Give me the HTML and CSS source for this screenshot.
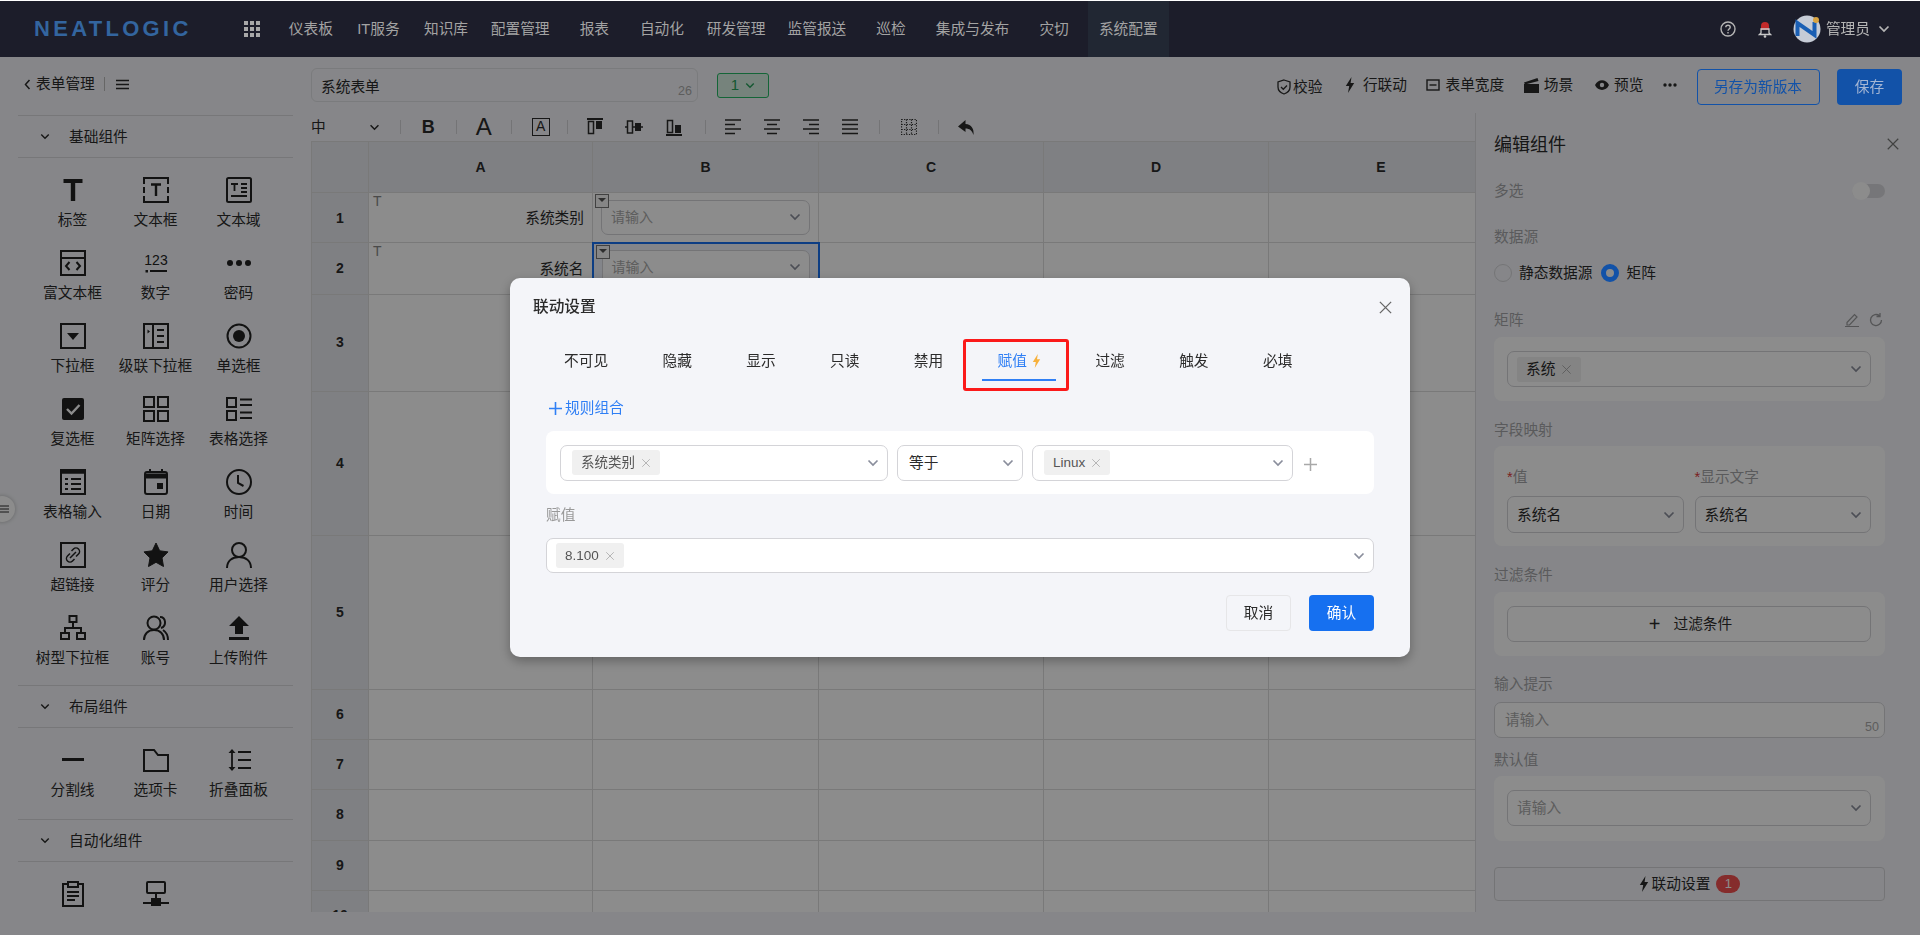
FILE: index.html
```html
<!DOCTYPE html>
<html lang="zh-CN">
<head>
  <meta charset="UTF-8" />
  <title>系统表单</title>
  <link rel="stylesheet" href="styles.css">
</head>
<body>

<svg class="sprite" aria-hidden="true">
  <symbol id="chev" viewBox="0 0 12 8"><path d="M1.5 1.5 6 6l4.5-4.5" fill="none" stroke="currentColor" stroke-width="1.7"/></symbol>
  <symbol id="cross" viewBox="0 0 12 12"><path d="M1.5 1.5l9 9M10.5 1.5l-9 9" fill="none" stroke="currentColor" stroke-width="1"/></symbol>
  <symbol id="bolt" viewBox="0 0 10 16"><path d="M6.5 0 0.8 9h3.4L3 16l6.2-10H5.6z" fill="currentColor"/></symbol>
</svg>

<header class="nav">
  <div class="logo">NEATLOGIC</div>
  <svg class="nav-grid" width="16" height="16" viewBox="0 0 16 16" fill="#a8a8a8">
    <rect width="4" height="4"/><rect x="6" width="4" height="4"/><rect x="12" width="4" height="4"/>
    <rect y="6" width="4" height="4"/><rect x="6" y="6" width="4" height="4"/><rect x="12" y="6" width="4" height="4"/>
    <rect y="12" width="4" height="4"/><rect x="6" y="12" width="4" height="4"/><rect x="12" y="12" width="4" height="4"/>
  </svg>
  <nav class="nav-menu">
    <a>仪表板</a><a>IT服务</a><a>知识库</a><a>配置管理</a><a>报表</a><a>自动化</a><a>研发管理</a><a>监管报送</a><a>巡检</a><a>集成与发布</a><a>灾切</a><a class="active">系统配置</a>
  </nav>
  <div class="nav-right">
    <svg width="16" height="16" viewBox="0 0 16 16" fill="none" stroke="#b5b5b5" stroke-width="1.4"><circle cx="8" cy="8" r="7"/><path d="M5.8 6.2C5.8 3.6 10.2 3.6 10.2 6.2 10.2 8 8 8 8 9.8"/><path d="M8 11v1.6"/></svg>
    <svg class="nav-bell" width="14" height="20" viewBox="0 0 14 20"><path d="M3 7a4 4 0 0 1 8 0v4H3z" fill="#c22a2a"/><path d="M3 10h8v4l1.500 1.500H1.500L3 14z" fill="none" stroke="#c9c9c9" stroke-width="1.300"/><circle cx="7" cy="17.500" r="1.300" fill="#c9c9c9"/></svg>
    <svg class="nav-avatar" width="28" height="28" viewBox="0 0 28 28"><circle cx="14" cy="14" r="13.500" fill="#c6ccd6"/><path d="M4.500 21V8l17 12V7" fill="none" stroke="#1a5fb4" stroke-width="4"/><circle cx="23" cy="5" r="3" fill="#d9a441"/></svg>
    <span class="nav-user">管理员</span>
    <svg class="nav-chev" width="12" height="8"><use href="#chev"/></svg>
  </div>
</header>

<div class="workspace">
  <aside class="left">
    <div class="left-head">
      <svg width="7" height="11" viewBox="0 0 7 11" fill="none" stroke="currentColor" stroke-width="1.500"><path d="M5.500 1 1.500 5.500l4 4.500"/></svg>
      <span class="left-title">表单管理</span>
      <i class="left-sep"></i>
      <svg width="13" height="11" viewBox="0 0 13 11" fill="none" stroke="currentColor" stroke-width="1.400"><path d="M0 1.500h13M0 5.500h13M0 9.500h13"/></svg>
    </div>

    <div class="sec-head"><svg width="10" height="7"><use href="#chev"/></svg><span>基础组件</span></div>
    <div class="widgets">
      <div class="widget"><svg viewBox="0 0 26 26" width="26" height="26"><path d="M3.500 2h19v4h-7.300v18h-4.400V6H3.500z" fill="currentColor"/></svg>标签</div>
      <div class="widget"><svg viewBox="0 0 26 26" width="26" height="26" fill="none" stroke="currentColor" stroke-width="2"><path d="M1 7V1h24v6M1 10v6M25 10v6M1 19v6h24v-6"/><path d="M8 7.500h10M13 7.500V19" stroke-width="2.400"/></svg>文本框</div>
      <div class="widget"><svg viewBox="0 0 26 26" width="26" height="26" fill="none" stroke="currentColor" stroke-width="2"><rect x="1" y="1" width="24" height="24" rx="1.500"/><path d="M5 7h7M8.500 7v7M15 7h6M15 11h6M15 15h6M5 19h16" stroke-width="1.800"/></svg>文本域</div>

      <div class="widget"><svg viewBox="0 0 26 26" width="26" height="26" fill="none" stroke="currentColor" stroke-width="2"><rect x="1" y="1" width="24" height="24"/><path d="M1 8h24"/><path d="M9.500 12 6 16l3.500 4M16.500 12l3.500 4-3.500 4"/></svg>富文本框</div>
      <div class="widget"><svg viewBox="0 0 26 26" width="26" height="26"><text class="num-glyph" x="13" y="15" text-anchor="middle">123</text><rect x="2.500" y="20" width="2.500" height="2.500" fill="currentColor"/><rect x="7" y="20" width="17" height="2" fill="currentColor"/></svg>数字</div>
      <div class="widget"><svg viewBox="0 0 26 26" width="26" height="26" fill="currentColor"><circle cx="4" cy="13" r="3"/><circle cx="13" cy="13" r="3"/><circle cx="22" cy="13" r="3"/></svg>密码</div>

      <div class="widget"><svg viewBox="0 0 26 26" width="26" height="26"><rect x="1" y="1" width="24" height="24" fill="none" stroke="currentColor" stroke-width="2"/><path d="M7 10h12l-6 7z" fill="currentColor"/></svg>下拉框</div>
      <div class="widget"><svg viewBox="0 0 26 26" width="26" height="26" fill="none" stroke="currentColor" stroke-width="2"><rect x="1" y="1" width="24" height="24"/><path d="M10 1v24M14 7h7M14 13h7M14 19h7"/><path d="M4.500 6.500 7 8.500l-2.500 2z" fill="currentColor" stroke="none"/></svg>级联下拉框</div>
      <div class="widget"><svg viewBox="0 0 26 26" width="26" height="26"><circle cx="13" cy="13" r="11.500" fill="none" stroke="currentColor" stroke-width="2"/><circle cx="13" cy="13" r="6" fill="currentColor"/></svg>单选框</div>

      <div class="widget"><svg viewBox="0 0 26 26" width="26" height="26"><rect x="2" y="2" width="22" height="22" rx="2" fill="currentColor"/><path d="M7 13l4.500 4.500L19.500 9" fill="none" stroke="#fff" stroke-width="2.400"/></svg>复选框</div>
      <div class="widget"><svg viewBox="0 0 26 26" width="26" height="26" fill="none" stroke="currentColor" stroke-width="2"><rect x="1" y="1" width="10" height="10"/><rect x="15" y="1" width="10" height="10"/><rect x="1" y="15" width="10" height="10"/><rect x="15" y="15" width="10" height="10"/></svg>矩阵选择</div>
      <div class="widget"><svg viewBox="0 0 26 26" width="26" height="26" fill="none" stroke="currentColor" stroke-width="2"><rect x="1" y="2" width="9" height="9"/><rect x="1" y="15" width="9" height="9"/><path d="M14 3.500h12M14 9h12M14 16.500h12M14 22h12"/></svg>表格选择</div>

      <div class="widget"><svg viewBox="0 0 26 26" width="26" height="26" fill="none" stroke="currentColor" stroke-width="2"><rect x="1" y="1" width="24" height="24"/><path d="M1 3h24" stroke-width="3.500"/><path d="M5 10h3M11 10h10M5 15h3M11 15h10M5 20h3M11 20h10"/></svg>表格输入</div>
      <div class="widget"><svg viewBox="0 0 26 26" width="26" height="26" fill="none" stroke="currentColor" stroke-width="2"><rect x="2" y="3" width="22" height="22" rx="2"/><path d="M2 7h22" stroke-width="5"/><path d="M7 0v4M19 0v4"/><rect x="14" y="14" width="6" height="6" fill="currentColor" stroke="none"/></svg>日期</div>
      <div class="widget"><svg viewBox="0 0 26 26" width="26" height="26" fill="none" stroke="currentColor" stroke-width="2"><circle cx="13" cy="13" r="12"/><path d="M12 6v8l5.500 3"/></svg>时间</div>

      <div class="widget"><svg viewBox="0 0 26 26" width="26" height="26" fill="none" stroke="currentColor" stroke-width="2"><rect x="1" y="1" width="24" height="24"/><path d="M11.500 9l2-2a3.300 3.300 0 0 1 5 5l-2.500 2.500M14.500 17l-2 2a3.300 3.300 0 0 1-5-5L10 11.500M10 16l6-6" stroke-width="1.500"/></svg>超链接</div>
      <div class="widget"><svg viewBox="0 0 26 26" width="26" height="26"><path d="M13 1l3.700 7.800 8.300 1.100-6 6 1.500 8.600L13 20.300l-7.500 4.200L7 15.900l-6-6 8.300-1.100z" fill="currentColor" stroke="currentColor" stroke-linejoin="round"/></svg>评分</div>
      <div class="widget"><svg viewBox="0 0 26 26" width="26" height="26" fill="none" stroke="currentColor" stroke-width="2"><circle cx="13" cy="8" r="7"/><path d="M1 26c0-7 5-11 12-11s12 4 12 11"/></svg>用户选择</div>

      <div class="widget"><svg viewBox="0 0 26 26" width="26" height="26" fill="none" stroke="currentColor" stroke-width="2"><rect x="9.500" y="1" width="7" height="6"/><rect x="1" y="18" width="8" height="6"/><rect x="17" y="18" width="8" height="6"/><path d="M13 7v6M5 18v-5h16v5"/></svg>树型下拉框</div>
      <div class="widget"><svg viewBox="0 0 26 26" width="26" height="26" fill="none" stroke="currentColor" stroke-width="2"><circle cx="11" cy="8" r="6.500"/><path d="M1 25c0-6 4-10 10-10s10 4 10 10M17 2c6 0 7 9 1 11M20 15c3 2 5 5 5 10"/></svg>账号</div>
      <div class="widget"><svg viewBox="0 0 26 26" width="26" height="26" fill="currentColor"><path d="M13 1l10 10h-6v8H9v-8H3z"/><rect x="3" y="22" width="20" height="3"/></svg>上传附件</div>
    </div>

    <div class="sec-head"><svg width="10" height="7"><use href="#chev"/></svg><span>布局组件</span></div>
    <div class="widgets layout">
      <div class="widget"><svg viewBox="0 0 26 26" width="26" height="26"><rect x="2" y="11" width="22" height="3" fill="currentColor"/></svg>分割线</div>
      <div class="widget"><svg viewBox="0 0 26 26" width="26" height="26" fill="none" stroke="currentColor" stroke-width="2"><path d="M1 3h10l4 5h10v16H1z"/></svg>选项卡</div>
      <div class="widget"><svg viewBox="0 0 26 26" width="26" height="26" fill="none" stroke="currentColor" stroke-width="2"><path d="M6 3v20" stroke-width="1.800"/><path d="M2.500 6 6 2l3.500 4zM2.500 20 6 24l3.500-4z" fill="currentColor" stroke="none"/><path d="M12 5h13M12 13h13M12 21h13"/></svg>折叠面板</div>
    </div>

    <div class="sec-head"><svg width="10" height="7"><use href="#chev"/></svg><span>自动化组件</span></div>
    <div class="widgets layout">
      <div class="widget"><svg viewBox="0 0 26 26" width="26" height="26" fill="none" stroke="currentColor" stroke-width="2"><path d="M8 3H3v22h20V3h-5"/><rect x="8" y="1" width="10" height="5"/><path d="M7 11h12M7 15h12M7 19h8"/></svg></div>
      <div class="widget"><svg viewBox="0 0 26 26" width="26" height="26" fill="none" stroke="currentColor" stroke-width="2"><rect x="4" y="1" width="18" height="11" rx="1"/><path d="M13 12v5M0 22h8M18 22h8"/><rect x="8" y="17" width="10" height="8" fill="currentColor" stroke="none"/></svg></div>
    </div>
  </aside>

  <div class="center">
    <div class="topbar">
      <div class="form-name">系统表单<span class="count">26</span></div>
      <div class="version">1<svg width="10" height="7"><use href="#chev"/></svg></div>
      <div class="actions">
        <span class="act act-check"><svg width="14" height="16" viewBox="0 0 14 16" fill="none" stroke="currentColor" stroke-width="1.300"><path d="M7 1l6 2v5c0 3.500-3 6-6 7-3-1-6-3.500-6-7V3z"/><path d="M4 8l2.300 2.300L10 6.500"/></svg>校验</span>
        <span class="act act-link"><svg width="10" height="16"><use href="#bolt"/></svg>行联动</span>
        <span class="act"><svg width="14" height="12" viewBox="0 0 14 12" fill="none" stroke="currentColor" stroke-width="1.400"><rect x="1" y="1" width="12" height="10"/><path d="M3.500 6h7"/></svg>表单宽度</span>
        <span class="act"><svg width="15" height="15" viewBox="0 0 15 15" fill="currentColor"><path d="M0 6h15v9H0zM0 4.500 13.500 0l1 3L1 6.500z"/></svg>场景</span>
        <span class="act act-view"><svg width="14" height="10" viewBox="0 0 14 10"><path d="M0 5c3-6.500 11-6.500 14 0-3 6.500-11 6.500-14 0z" fill="currentColor"/><circle cx="7" cy="5" r="2.200" fill="#f4f5f9"/></svg>预览</span>
        <svg class="act-more" width="14" height="4" viewBox="0 0 14 4" fill="currentColor"><circle cx="2" cy="2" r="1.700"/><circle cx="7" cy="2" r="1.700"/><circle cx="12" cy="2" r="1.700"/></svg>
        <button class="btn btn-outline">另存为新版本</button>
        <button class="btn btn-save">保存</button>
      </div>
    </div>

    <div class="body">
      <div class="editor">
        <div class="fmt">
          <div class="fmt-size">中<svg width="11" height="7"><use href="#chev"/></svg></div>
          <i class="fmt-sep"></i>
          <div class="fmt-one fmt-b">B</div>
          <i class="fmt-sep"></i>
          <div class="fmt-one fmt-a">A</div>
          <i class="fmt-sep"></i>
          <div class="fmt-one"><span class="fmt-boxa">A</span></div>
          <i class="fmt-sep"></i>
          <div class="fmt-group valign">
            <svg width="18" height="18" viewBox="0 0 18 18"><path d="M1 1h16" stroke="currentColor" stroke-width="2"/><rect x="2.500" y="3.500" width="5" height="12" fill="none" stroke="currentColor" stroke-width="1.500"/><rect x="10" y="3" width="6" height="8" fill="currentColor"/></svg>
            <svg width="18" height="18" viewBox="0 0 18 18"><path d="M0 9h18" stroke="currentColor" stroke-width="1.500"/><rect x="2.500" y="3" width="5" height="12" fill="#f4f5f9" stroke="currentColor" stroke-width="1.500"/><rect x="10" y="5" width="6" height="8" fill="currentColor"/></svg>
            <svg width="18" height="18" viewBox="0 0 18 18"><path d="M1 17h16" stroke="currentColor" stroke-width="2"/><rect x="2.500" y="2.500" width="5" height="12" fill="none" stroke="currentColor" stroke-width="1.500"/><rect x="10" y="7" width="6" height="8" fill="currentColor"/></svg>
          </div>
          <i class="fmt-sep"></i>
          <div class="fmt-group halign">
            <svg width="16" height="16" viewBox="0 0 16 16" stroke="currentColor" stroke-width="1.600"><path d="M0 1h16M0 5.500h10M0 10h16M0 14.500h10"/></svg>
            <svg width="16" height="16" viewBox="0 0 16 16" stroke="currentColor" stroke-width="1.600"><path d="M0 1h16M3 5.500h10M0 10h16M3 14.500h10"/></svg>
            <svg width="16" height="16" viewBox="0 0 16 16" stroke="currentColor" stroke-width="1.600"><path d="M0 1h16M6 5.500h10M0 10h16M6 14.500h10"/></svg>
            <svg width="16" height="16" viewBox="0 0 16 16" stroke="currentColor" stroke-width="1.600"><path d="M0 1h16M0 5.500h16M0 10h16M0 14.500h16"/></svg>
          </div>
          <i class="fmt-sep"></i>
          <div class="fmt-one fmt-dots"><svg width="16" height="16" viewBox="0 0 16 16" fill="none" stroke="currentColor" stroke-width="1.200" stroke-dasharray="1.200 1.400"><path d="M.5.500h15v15H.5zM5.500.500v15M10.500.500v15M.5 5.500h15M.5 10.500h15"/></svg></div>
          <i class="fmt-sep"></i>
          <div class="fmt-one fmt-undo"><svg width="17" height="15" viewBox="0 0 17 15"><path d="M7.500 0 0 6.500l7.500 5.500V8.500c4 0 6.500 2 8 6.500.8-6-2-10.500-8-11z" fill="currentColor"/></svg></div>
        </div>

        <div class="sheet-wrap">
          <table class="sheet">
            <colgroup><col class="c-no"><col class="c-a"><col class="c-b"><col class="c-n"><col class="c-n"><col class="c-n"></colgroup>
            <tr class="h51"><th></th><th>A</th><th>B</th><th>C</th><th>D</th><th>E</th></tr>
            <tr class="h50">
              <th>1</th>
              <td class="label-cell"><i class="t-mark">T</i>系统类别</td>
              <td class="comp-cell"><i class="comp-mark"></i><div class="sel sel-cell"><span class="ph">请输入</span><svg width="12" height="8"><use href="#chev"/></svg></div></td>
              <td></td><td></td><td></td>
            </tr>
            <tr class="h52">
              <th>2</th>
              <td class="label-cell"><i class="t-mark">T</i>系统名</td>
              <td class="comp-cell picked"><i class="comp-mark"></i><div class="sel sel-cell"><span class="ph">请输入</span><svg width="12" height="8"><use href="#chev"/></svg></div></td>
              <td></td><td></td><td></td>
            </tr>
            <tr class="h97"><th>3</th><td></td><td></td><td></td><td></td><td></td></tr>
            <tr class="h144"><th>4</th><td></td><td></td><td></td><td></td><td></td></tr>
            <tr class="h154"><th>5</th><td></td><td></td><td></td><td></td><td></td></tr>
            <tr class="h50"><th>6</th><td></td><td></td><td></td><td></td><td></td></tr>
            <tr class="h50"><th>7</th><td></td><td></td><td></td><td></td><td></td></tr>
            <tr class="h51"><th>8</th><td></td><td></td><td></td><td></td><td></td></tr>
            <tr class="h50"><th>9</th><td></td><td></td><td></td><td></td><td></td></tr>
            <tr class="h50"><th>10</th><td></td><td></td><td></td><td></td><td></td></tr>
          </table>
        </div>
      </div>

      <aside class="panel">
        <div class="panel-title">编辑组件<svg width="14" height="14"><use href="#cross"/></svg></div>

        <div class="p-switch"><span class="p-label">多选</span><i class="switch"></i></div>
        <div class="p-label m26">数据源</div>
        <div class="radios">
          <i class="radio"></i><span>静态数据源</span>
          <i class="radio on"></i><span>矩阵</span>
        </div>

        <div class="p-label m26 p-label-tools">矩阵
          <span class="p-tools">
            <svg width="14" height="14" viewBox="0 0 14 14" fill="none" stroke="currentColor" stroke-width="1.200"><path d="M2 9.500 9.500 1.500l2.500 2.500L4.500 12H2zM0 13.500h14"/></svg>
            <svg width="14" height="14" viewBox="0 0 14 14" fill="none" stroke="currentColor" stroke-width="1.300"><path d="M12.500 7A5.500 5.500 0 1 1 10.500 2.800M11 0v3.500H7.500"/></svg>
          </span>
        </div>
        <div class="card h64 m7">
          <div class="sel"><span class="tag tag-p">系统<svg width="11" height="11"><use href="#cross"/></svg></span><svg width="12" height="8"><use href="#chev"/></svg></div>
        </div>

        <div class="p-label m19">字段映射</div>
        <div class="card card-pair h100 m6">
          <div class="pair">
            <div class="pair-col"><div class="p-label"><em>*</em>值</div><div class="sel sel-tall"><span class="val">系统名</span><svg width="12" height="8"><use href="#chev"/></svg></div></div>
            <div class="pair-col"><div class="p-label"><em>*</em>显示文字</div><div class="sel sel-tall"><span class="val">系统名</span><svg width="12" height="8"><use href="#chev"/></svg></div></div>
          </div>
        </div>

        <div class="p-label m19">过滤条件</div>
        <div class="card h64 m7">
          <div class="sel sel-add"><span class="plus">+</span>过滤条件</div>
        </div>

        <div class="p-label m18">输入提示</div>
        <div class="p-input"><span class="ph">请输入</span><span class="count">50</span></div>

        <div class="p-label m12">默认值</div>
        <div class="card h65 m6">
          <div class="sel"><span class="ph">请输入</span><svg width="12" height="8"><use href="#chev"/></svg></div>
        </div>

        <div class="link-btn"><svg width="10" height="16"><use href="#bolt"/></svg>联动设置<span class="badge">1</span></div>
      </aside>
    </div>
  </div>
</div>

<div class="side-handle"><svg width="10" height="8" viewBox="0 0 10 8" fill="none" stroke="currentColor"><path d="M0 1h9M0 4h9M0 7h9"/></svg></div>

<div class="mask"></div>

<div class="modal">
  <div class="modal-title">联动设置<svg width="15" height="15"><use href="#cross"/></svg></div>
  <div class="tabs">
    <span class="tab">不可见</span><span class="tab">隐藏</span><span class="tab">显示</span><span class="tab">只读</span><span class="tab">禁用</span>
    <span class="tab active">赋值<svg width="9" height="14"><use href="#bolt"/></svg></span>
    <span class="tab">过滤</span><span class="tab">触发</span><span class="tab">必填</span>
  </div>
  <div class="callout"></div>

  <div class="add-rule"><svg width="13" height="13" viewBox="0 0 13 13" stroke="currentColor" stroke-width="1.600"><path d="M6.500 0v13M0 6.500h13"/></svg>规则组合</div>

  <div class="rule">
    <div class="sel s-field"><span class="tag">系统类别<svg width="10" height="10"><use href="#cross"/></svg></span><svg width="12" height="8"><use href="#chev"/></svg></div>
    <div class="sel s-op"><span class="val">等于</span><svg width="12" height="8"><use href="#chev"/></svg></div>
    <div class="sel s-value"><span class="tag">Linux<svg width="10" height="10"><use href="#cross"/></svg></span><svg width="12" height="8"><use href="#chev"/></svg></div>
    <svg class="rule-add" width="13" height="13" viewBox="0 0 13 13" stroke="currentColor" stroke-width="1.500"><path d="M6.500 0v13M0 6.500h13"/></svg>
  </div>

  <div class="assign-label">赋值</div>
  <div class="sel s-assign"><span class="tag">8.100<svg width="10" height="10"><use href="#cross"/></svg></span><svg width="12" height="8"><use href="#chev"/></svg></div>

  <div class="modal-foot">
    <button class="btn btn-cancel">取消</button>
    <button class="btn btn-ok">确认</button>
  </div>
</div>

</body>
</html>
```

FILE: styles.css
```css
* {
  box-sizing: border-box;
}

body {
  margin: 0;
  height: 935px;
  overflow: hidden;
  background: #f4f5f9;
  color: #2b2b2b;
  font-family: "Liberation Sans", "Noto Sans CJK SC", sans-serif;
  font-size: 14.7px;
  line-height: 20px;
}

i, em {
  font-style: normal;
}

svg {
  display: block;
  flex: none;
}

.sprite {
  display: none;
}

/* top nav */
.nav {
  position: relative;
  z-index: 5;
  display: flex;
  align-items: center;
  height: 57px;
  border-top: 1px solid #fff;
  background: #1c1d2a;
  color: #a3a3a3;
}

.logo {
  width: 210px;
  padding-left: 34px;
  color: #33659f;
  font-size: 22px;
  font-weight: bold;
  letter-spacing: 3.300px;
}

.nav-grid {
  margin-left: 34px;
}

.nav-menu {
  display: flex;
  margin-left: 17px;
  height: 56px;
}

.nav-menu a {
  display: flex;
  align-items: center;
  justify-content: center;
  min-width: 67.6px;
  padding: 0 11px;
}

.nav-menu a.active {
  background: #212733;
}

.nav-right {
  display: flex;
  align-items: center;
  margin-left: auto;
  padding-right: 30px;
  color: #b5b5b5;
}

.nav-bell {
  margin-left: 22px;
}

.nav-avatar {
  margin-left: 21px;
}

.nav-user {
  margin-left: 5px;
}

.nav-chev {
  margin-left: 8px;
}

/* page */
.workspace {
  display: flex;
  height: 855px;
}

.left {
  width: 311px;
  flex: none;
  padding: 0 18px;
  overflow: hidden;
}

.left-head {
  display: flex;
  align-items: center;
  height: 58px;
  padding: 0 0 4px 6px;
}

.left-title {
  margin-left: 5px;
}

.left-sep {
  width: 1px;
  height: 14px;
  margin: 0 11px 0 9px;
  background: #bbb;
}

.sec-head {
  display: flex;
  align-items: center;
  height: 43px;
  padding-left: 22px;
  border-top: 1px solid #d9d9dc;
  border-bottom: 1px solid #d9d9dc;
}

.sec-head span {
  margin-left: 19px;
}

.widgets {
  display: grid;
  grid-template-columns: repeat(3, 83px);
  row-gap: 19px;
  margin-left: 13px;
  padding: 19px 0 16px;
}

.widgets.layout {
  padding: 19px 0 18px;
}

.widget {
  display: flex;
  flex-direction: column;
  align-items: center;
  height: 54px;
  white-space: nowrap;
  color: #2b2b2b;
}

.widget svg {
  margin-bottom: 7px;
  color: #222;
}

.num-glyph {
  font-size: 14px;
  font-family: "Liberation Sans", sans-serif;
  fill: currentColor;
}

.side-handle {
  position: absolute;
  z-index: 2;
  left: -11px;
  top: 496px;
  width: 26px;
  height: 26px;
  padding: 9px 0 0 11px;
  border-radius: 50%;
  background: #fff;
  box-shadow: 0 0 4px rgba(0, 0, 0, .25);
}

.center {
  flex: 1;
  min-width: 0;
}

.topbar {
  display: flex;
  align-items: center;
  height: 56px;
}

.form-name {
  position: relative;
  width: 387px;
  height: 34px;
  padding: 8px 9px;
  border: 1px solid #dfe0e4;
  border-radius: 6px;
  background: #f4f5f9;
}

.count {
  position: absolute;
  right: 5px;
  bottom: 0;
  color: #aaa;
  font-size: 12.5px;
}

.version {
  display: flex;
  align-items: center;
  justify-content: center;
  gap: 6px;
  width: 52px;
  height: 25px;
  margin-left: 19px;
  border: 1px solid #25b864;
  border-radius: 3px;
  background: #d8efe2;
  color: #25a05a;
  font-size: 15px;
}

.actions {
  display: flex;
  align-items: center;
  gap: 19.5px;
  margin-left: auto;
  padding-right: 18px;
}

.act {
  display: flex;
  align-items: center;
  gap: 5px;
  white-space: nowrap;
}

.act-check {
  gap: 2px;
  margin: 3px 3px 0 0;
}

.act-link {
  gap: 8px;
}

.act-view {
  margin-left: 2.500px;
}

.btn {
  height: 36px;
  padding: 0;
  border: 1px solid transparent;
  border-radius: 4px;
  background: none;
  font: inherit;
  color: inherit;
}

.actions .btn {
  position: relative;
  z-index: 4;
  margin-top: 4px;
}

/* these two read brighter than the mask allows, so they sit above it */
.btn-outline {
  width: 123px;
  border-color: #1252a8;
  color: #1252a8;
}

.btn-save {
  width: 65px;
  margin-left: -2px;
  background: #1252a8;
  color: #a4b6d4;
}

.body {
  display: flex;
  height: 799px;
}

.editor {
  width: 1164px;
  flex: none;
  overflow: hidden;
}

.fmt {
  display: flex;
  align-items: center;
  height: 28px;
}

.fmt-size {
  display: flex;
  align-items: center;
  justify-content: space-between;
  width: 89px;
  padding-right: 20px;
}

.fmt-sep {
  width: 1px;
  height: 14px;
  background: #d4d4d8;
}

.fmt-one {
  display: flex;
  align-items: center;
  justify-content: center;
  width: 54.500px;
}

.fmt-b {
  font-size: 18px;
  font-weight: bold;
}

.fmt-a {
  font-size: 24px;
}

.fmt-boxa {
  width: 18px;
  height: 18px;
  margin-left: 3px;
  border: 1.500px solid #2b2b2b;
  font-size: 14px;
  line-height: 15px;
  text-align: center;
}

.fmt-group {
  display: flex;
  align-items: center;
}

.valign {
  gap: 21.500px;
  padding: 0 22px 0 18px;
}

.halign {
  gap: 23.300px;
  padding: 0 21px 0 19px;
}

.fmt-dots {
  width: 58px;
}

.fmt-undo {
  width: 54px;
}

.sheet-wrap {
  height: 771px;
  overflow: hidden;
}

.sheet {
  width: 1182px;
  table-layout: fixed;
  border-collapse: collapse;
  background: #fff;
  font-size: 14px;
}

.c-no { width: 57px; }
.c-a { width: 224px; }
.c-b { width: 226px; }
.c-n { width: 225px; }

.sheet th, .sheet td {
  padding: 0;
  border: 1px solid #dcdcdc;
}

.sheet th {
  background: #e8eaee;
  font-weight: bold;
  font-family: "Liberation Sans", sans-serif;
}

.sheet tr:nth-child(n+3) th {
  padding-bottom: 2px;
}

.h50 { height: 50px; }
.h51 { height: 51px; }
.h52 { height: 52px; }
.h97 { height: 97px; }
.h144 { height: 144px; }
.h154 { height: 154px; }

.label-cell {
  position: relative;
  padding-right: 8px !important;
  text-align: right;
  font-size: 14.7px;
}

.t-mark {
  position: absolute;
  left: 4px;
  top: 0;
  color: #888;
  font-family: "Liberation Sans", sans-serif;
  font-size: 14px;
  line-height: 16px;
}

.comp-cell {
  position: relative;
  padding: 0 8px !important;
}

.comp-cell.picked {
  padding-bottom: 3px !important;
  border: 2px solid #1670f0 !important;
  background: #eef2fb;
}

.comp-mark {
  position: absolute;
  z-index: 1;
  left: 2px;
  top: 1px;
  width: 14px;
  height: 14px;
  border: 1px solid #777;
  background: #f5f5f5;
}

.comp-mark::after {
  content: "";
  position: absolute;
  left: 2px;
  top: 3px;
  border: 4px solid transparent;
  border-top: 4px solid #555;
}

/* select */
.sel {
  display: flex;
  align-items: center;
  justify-content: space-between;
  height: 36px;
  padding: 0 6px 0 9px;
  border: 1px solid #d4d4d8;
  border-radius: 7px;
  background: #fff;
  color: #8a8e9c;
}

.sel > svg {
  margin-right: 2px;
}

.sel .ph, .ph {
  color: #aaa;
}

.sel .val {
  color: #2b2b2b;
}

.sel-cell {
  height: 35px;
}

.sel-tall {
  height: 37px;
  margin-top: 9px;
}

.tag {
  display: flex;
  align-items: center;
  height: 25px;
  padding: 0 9px;
  gap: 6px;
  border-radius: 3px;
  background: #f0f0f0;
  color: #555;
  font-size: 13.500px;
}

.tag svg {
  color: #aaa;
}

.tag-p {
  color: #2b2b2b;
  font-size: 14.700px;
}

/* right panel */
.panel {
  width: 445px;
  flex: none;
  padding: 20px 35px 0 18px;
  border-left: 1px solid #dcdce0;
  color: #2b2b2b;
}

.panel-title {
  display: flex;
  align-items: center;
  justify-content: space-between;
  margin-right: -15px;
  font-size: 18px;
  line-height: 25px;
}

.panel-title svg {
  margin-bottom: 4px;
  color: #777;
}

.p-label {
  color: #a5a5a8;
}

.p-label em {
  color: #e03a3a;
}

.p-switch {
  display: flex;
  align-items: center;
  justify-content: space-between;
  margin-top: 23px;
}

.switch {
  position: relative;
  width: 33px;
  height: 14px;
  border-radius: 7px;
  background: #d8d8dc;
}

.switch::after {
  content: "";
  position: absolute;
  left: 0;
  top: -2px;
  width: 18px;
  height: 18px;
  border-radius: 50%;
  background: #fff;
}

.m6 { margin-top: 6px; }
.m7 { margin-top: 7px; }
.m12 { margin-top: 12px; }
.m18 { margin-top: 18px; }
.m19 { margin-top: 19px; }
.m26 { margin-top: 26px; }

.radios {
  display: flex;
  align-items: center;
  margin-top: 16px;
}

.radios span {
  margin-left: 7px;
  margin-right: 9px;
}

.radio {
  width: 18px;
  height: 18px;
  border: 1px solid #d4d4d8;
  border-radius: 50%;
}

.radio.on {
  position: relative;
  z-index: 4;
  border: 5px solid #1252a8;
  background: #8c8c8c;
}

.p-label-tools {
  display: flex;
  align-items: center;
  justify-content: space-between;
  margin-top: 27px;
}

.p-tools {
  display: flex;
  gap: 10px;
  margin-right: 2px;
  color: #9a9a9d;
}

.card {
  padding: 14px 14px 0 13px;
  border-radius: 8px;
  background: #fff;
}

.card-pair {
  padding-top: 21px;
}

.h64 { height: 64px; }
.h65 { height: 65px; }
.h100 { height: 100px; }

.pair {
  display: flex;
  gap: 11px;
}

.pair-col {
  flex: 1;
}

.sel-add {
  justify-content: center;
  gap: 13px;
  color: #2b2b2b;
}

.plus {
  font-size: 20px;
}

.p-input {
  position: relative;
  height: 36px;
  margin-top: 8px;
  padding: 7px 10px;
  border: 1px solid #d4d4d8;
  border-radius: 7px;
  background: #fff;
}

.link-btn {
  display: flex;
  align-items: center;
  justify-content: center;
  height: 34px;
  margin-top: 26px;
  border: 1px solid #d4d4d8;
  border-radius: 4px;
}

.link-btn svg {
  margin-right: 3px;
}

.badge {
  width: 24px;
  height: 18px;
  margin-left: 6px;
  border-radius: 9px;
  background: #f25050;
  color: #fff;
  font-size: 13px;
  line-height: 18px;
  text-align: center;
}

/* modal */
.mask {
  position: fixed;
  z-index: 3;
  inset: 57px 0 0 0;
  background: rgba(0, 0, 0, .45);
}

.modal {
  position: fixed;
  z-index: 4;
  left: 510px;
  top: 278px;
  width: 900px;
  height: 379px;
  padding: 19px 36px 0;
  border-radius: 10px;
  background: #f4f5f9;
  box-shadow: 0 4px 12px rgba(0, 0, 0, .3);
}

.modal-title {
  display: flex;
  align-items: center;
  justify-content: space-between;
  margin: 0 -19px 0 -13px;
  font-size: 15.700px;
  font-weight: 500;
}

.modal-title svg {
  color: #666;
}

.tabs {
  display: flex;
  margin: 23px 0 0 2.500px;
}

.tab {
  display: flex;
  align-items: center;
  gap: 5px;
  height: 41px;
  padding: 2px 15.500px 0;
  margin-right: 23.400px;
  border-bottom: 2px solid transparent;
}

.tab.active {
  border-bottom-color: #2f7ff5;
  color: #2f7ff5;
}

.tab svg {
  color: #f7b13c;
}

.callout {
  position: absolute;
  left: 453px;
  top: 61px;
  width: 106px;
  height: 52px;
  border: 3px solid #fb1a1a;
  border-radius: 3px;
}

.add-rule {
  display: flex;
  align-items: center;
  gap: 3px;
  margin: 17px 0 0 3px;
  color: #2f7ff5;
}

.rule {
  display: flex;
  align-items: center;
  gap: 9px;
  height: 63px;
  margin-top: 13px;
  padding-left: 14px;
  border-radius: 8px;
  background: #fff;
}

.rule .sel {
  padding-left: 11px;
}

.s-field { width: 328px; }
.s-op { width: 126px; }
.s-value { width: 261px; }

.rule-add {
  margin: 3px 0 0 2px;
  color: #a8a8a8;
}

.assign-label {
  margin-top: 11px;
  color: #999;
}

.s-assign {
  height: 35px;
  margin-top: 13px;
}

.modal-foot {
  display: flex;
  justify-content: flex-end;
  gap: 18px;
  margin-top: 22px;
}

.btn-cancel {
  width: 65px;
  border-color: #e6e6e8;
}

.btn-ok {
  width: 65px;
  background: #1670f0;
  color: #fff;
}
```
